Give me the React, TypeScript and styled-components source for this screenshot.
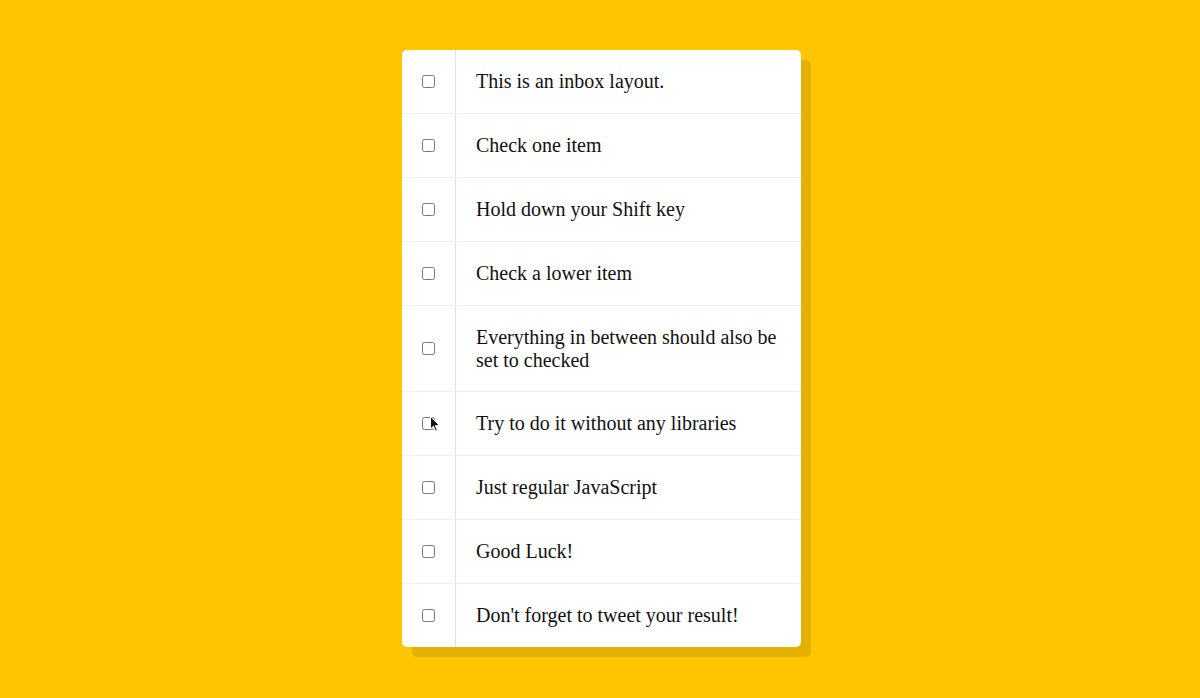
import styled, { createGlobalStyle } from 'styled-components'

const GlobalStyle = createGlobalStyle`
	html {
		font-family: sans-serif;
		background: #ffc600;
	}
	body {
		margin: 8px;
		padding-left: 3px;
	}
`

const Inbox = styled.div`
	max-width: 399px;
	margin: 42px auto 50px;
	background: white;
	border-radius: 5px;
	box-shadow: 10px 10px 0 rgba(0, 0, 0, 0.1);
`

const Item = styled.div`
	display: flex;
	align-items: center;
	min-height: 63px;
	border-bottom: 1px solid #f1f1f1;
	&:last-child {
		border-bottom: 0;
	}
`

const BoxCell = styled.span`
	position: relative;
	display: flex;
`

const Check = styled.input`
	margin: 20px;
	width: 13px;
	height: 13px;
`

const Cursor = styled.svg`
	position: absolute;
	left: 28px;
	top: 19px;
	pointer-events: none;
`

const Label = styled.p`
	margin: 0;
	padding: 20px;
	flex: 1;
	align-self: stretch;
	font-family: 'Liberation Serif', serif;
	font-size: 20px;
	line-height: 22.5px;
	font-weight: 200;
	color: #111;
	border-left: 1px solid #d1e2ff;
`

const items = [
	'This is an inbox layout.',
	'Check one item',
	'Hold down your Shift key',
	'Check a lower item',
	'Everything in between should also be set to checked',
	'Try to do it without any libraries',
	'Just regular JavaScript',
	'Good Luck!',
	"Don't forget to tweet your result!",
]

export default function App() {
	return (
		<>
			<GlobalStyle />
			<Inbox>
				{items.map((text, i) => (
					<Item key={i}>
						<BoxCell>
							<Check type="checkbox" />
							{i === 5 && (
								<Cursor width="11" height="17" viewBox="0 0 11 17">
									<path
										d="M0.5 0.5 L0.5 13 L3.5 10.2 L5.6 15.2 L7.4 14.4 L5.4 9.6 L9.5 9.6 Z"
										fill="#111"
										stroke="#fff"
										strokeWidth="1"
									/>
								</Cursor>
							)}
						</BoxCell>
						<Label>{text}</Label>
					</Item>
				))}
			</Inbox>
		</>
	)
}
